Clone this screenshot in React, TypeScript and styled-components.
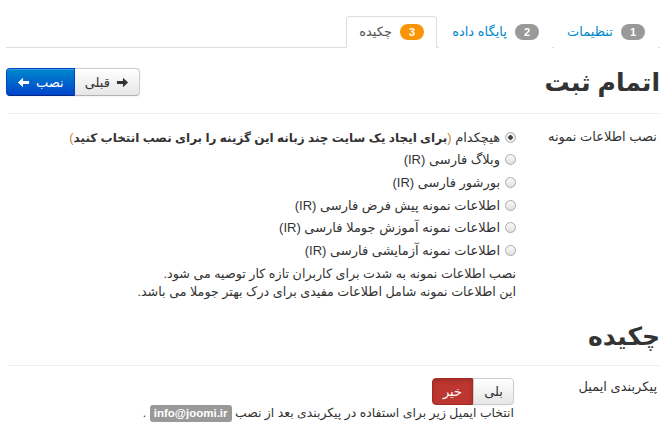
import styled, { createGlobalStyle } from "styled-components";

const GlobalStyle = createGlobalStyle`
  body {
    margin: 0;
    background: #fff;
    font-family: "Liberation Sans", "DejaVu Sans", sans-serif;
    font-size: 13px;
    color: #333;
    direction: rtl;
  }
`;

const tabs = [
  { n: 1, title: "تنظیمات" },
  { n: 2, title: "پایگاه داده" },
  { n: 3, title: "چکیده", active: true },
];

const sampleOptions = [
  "وبلاگ فارسی (IR)",
  "بورشور فارسی (IR)",
  "اطلاعات نمونه پیش فرض فارسی (IR)",
  "اطلاعات نمونه آموزش جوملا فارسی (IR)",
  "اطلاعات نمونه آزمایشی فارسی (IR)",
];

export default function App() {
  return (
    <Page>
      <GlobalStyle />
      <Tabs>
        {tabs.map((t) => (
          <Tab key={t.n} $active={!!t.active}>
            <Badge $active={!!t.active}>{t.n}</Badge>
            {t.title}
          </Tab>
        ))}
      </Tabs>

      <HeaderRow>
        <Heading>اتمام ثبت</Heading>
        <BtnGroup>
          <Btn>
            <Arrow dir="right" />
            قبلی
          </Btn>
          <Btn $variant="primary">
            نصب
            <Arrow dir="left" light />
          </Btn>
        </BtnGroup>
      </HeaderRow>
      <Rule />

      <FormRow>
        <Label>نصب اطلاعات نمونه</Label>
        <Controls>
          <Option>
            <Radio checked />
            <span>
              هیچکدام{" "}
              <Paren>
                (<b>برای ایجاد یک سایت چند زبانه این گزینه را برای نصب انتخاب کنید</b>)
              </Paren>
            </span>
          </Option>
          {sampleOptions.map((o) => (
            <Option key={o}>
              <Radio />
              <span>{o}</span>
            </Option>
          ))}
          <Help>
            نصب اطلاعات نمونه به شدت برای کاربران تازه کار توصیه می شود.
            <br />
            این اطلاعات نمونه شامل اطلاعات مفیدی برای درک بهتر جوملا می باشد.
          </Help>
        </Controls>
      </FormRow>

      <SectionHeading>چکیده</SectionHeading>
      <Rule />

      <FormRow $top={5}>
        <Label $pad={-2}>پیکربندی ایمیل</Label>
        <Controls $shift={2}>
          <Toggle>
            <ToggleBtn>بلی</ToggleBtn>
            <ToggleBtn $on>خیر</ToggleBtn>
          </Toggle>
          <EmailHelp>
            انتخاب ایمیل زیر برای استفاده در پیکربندی بعد از نصب{" "}
            <Tag>info@joomi.ir</Tag> .
          </EmailHelp>
        </Controls>
      </FormRow>
    </Page>
  );
}

function Arrow({ dir, light }: { dir: "left" | "right"; light?: boolean }) {
  return (
    <ArrowSvg viewBox="0 0 14 14" $dir={dir}>
      <path
        d="M1 5.5h6.5V2l5.5 5-5.5 5V8.5H1z"
        fill={light ? "#fff" : "#333"}
      />
    </ArrowSvg>
  );
}

const Page = styled.div`
  padding: 16px 8px 0 6px;
`;

const Tabs = styled.ul`
  display: flex;
  margin: 0;
  padding: 0 2px 0 0;
  list-style: none;
  border-bottom: 1px solid #ddd;
`;

const Tab = styled.li<{ $active: boolean }>`
  display: flex;
  align-items: center;
  padding: 7px 12px;
  line-height: 16px;
  margin-bottom: -1px;
  margin-left: 2px;
  border: 1px solid ${(p) => (p.$active ? "#ddd" : "transparent")};
  border-bottom-color: ${(p) => (p.$active ? "#fff" : "transparent")};
  border-radius: 4px 4px 0 0;
  background: #fff;
  color: ${(p) => (p.$active ? "#555" : "#0088cc")};
`;

const Badge = styled.span<{ $active: boolean }>`
  display: inline-block;
  margin-left: 8px;
  padding: 1px 9px;
  border-radius: 9px;
  background: ${(p) => (p.$active ? "#f89406" : "#999")};
  color: #fff;
  font-weight: bold;
  font-size: 11px;
  line-height: 14px;
`;

const HeaderRow = styled.div`
  display: flex;
  justify-content: space-between;
  align-items: center;
  margin-top: 19px;
`;

const Heading = styled.h3`
  margin: 0;
  font-size: 25px;
  line-height: 30px;
  font-weight: bold;
  color: #333;
`;

const BtnGroup = styled.div`
  display: flex;
`;

const Btn = styled.div<{ $variant?: "primary" }>`
  display: flex;
  align-items: center;
  gap: 6px;
  height: 26px;
  padding: 0 10px;
  border: 1px solid ${(p) => (p.$variant ? "#0044cc" : "#ccc")};
  border-bottom-color: ${(p) => (p.$variant ? "#002a80" : "#b3b3b3")};
  background: ${(p) =>
    p.$variant
      ? "linear-gradient(#0088cc, #0044cc)"
      : "linear-gradient(#ffffff, #e6e6e6)"};
  color: ${(p) => (p.$variant ? "#fff" : "#333")};
  border-radius: ${(p) => (p.$variant ? "4px 0 0 4px" : "0 4px 4px 0")};
  margin-right: ${(p) => (p.$variant ? "-1px" : "0")};
  box-shadow: inset 0 1px 0 rgba(255, 255, 255, 0.2),
    0 1px 2px rgba(0, 0, 0, 0.05);
`;

const ArrowSvg = styled.svg<{ $dir: "left" | "right" }>`
  width: 13px;
  height: 13px;
  transform: ${(p) => (p.$dir === "left" ? "scaleX(-1)" : "none")};
`;

const Rule = styled.hr`
  margin: 16px 0 12px 3px;
  border: 0;
  border-top: 1px solid #eee;
`;

const FormRow = styled.div<{ $top?: number }>`
  display: grid;
  grid-template-columns: 144px 1fr;
  margin-top: ${(p) => p.$top ?? 0}px;
`;

const Label = styled.div<{ $pad?: number }>`
  margin-top: ${(p) => p.$pad ?? 0}px;
  line-height: 22px;
  padding-right: 3px;
`;

const Controls = styled.div<{ $shift?: number }>`
  display: flex;
  flex-direction: column;
  align-items: flex-start;
  padding-right: ${(p) => p.$shift ?? 0}px;
`;

const Option = styled.label`
  display: flex;
  align-items: center;
  gap: 5px;
  height: 22.6px;
  white-space: nowrap;
`;

const Radio = styled.span<{ checked?: boolean }>`
  box-sizing: border-box;
  width: 11px;
  height: 11px;
  border-radius: 50%;
  border: 1px solid #aaa;
  background: ${(p) =>
    p.checked
      ? "radial-gradient(circle, #444 0 2px, #eee 2.5px)"
      : "linear-gradient(#fafafa, #e0e0e0)"};
  flex: none;
`;

const Paren = styled.span`
  color: #c08a3e;
  b {
    color: #333;
    font-size: 12px;
  }
`;

const Help = styled.p`
  margin: 3px 0 0;
  line-height: 18.5px;
  font-size: 12.7px;
  color: #333;
`;

const SectionHeading = styled(Heading)`
  margin-top: 21px;
  line-height: 26px;
`;

const Toggle = styled.div`
  display: flex;
`;

const ToggleBtn = styled.div<{ $on?: boolean }>`
  box-sizing: border-box;
  width: 41px;
  height: 27px;
  display: flex;
  align-items: center;
  justify-content: center;
  border: 1px solid ${(p) => (p.$on ? "#a52a22" : "#ccc")};
  background: ${(p) =>
    p.$on ? "#bd362f" : "linear-gradient(#ffffff, #e6e6e6)"};
  color: ${(p) => (p.$on ? "#fff" : "#333")};
  border-radius: ${(p) => (p.$on ? "4px 0 0 4px" : "0 4px 4px 0")};
  box-shadow: ${(p) =>
    p.$on ? "inset 0 2px 4px rgba(0,0,0,0.15)" : "0 1px 2px rgba(0,0,0,0.05)"};
`;

const EmailHelp = styled.div`
  margin-top: -1px;
  line-height: 18px;
  font-size: 12.4px;
`;

const Tag = styled.span`
  display: inline-block;
  padding: 1px 4px 2px;
  border-radius: 3px;
  background: #999;
  color: #fff;
  font-weight: bold;
  font-size: 11.5px;
  line-height: 14px;
  direction: ltr;
`;
